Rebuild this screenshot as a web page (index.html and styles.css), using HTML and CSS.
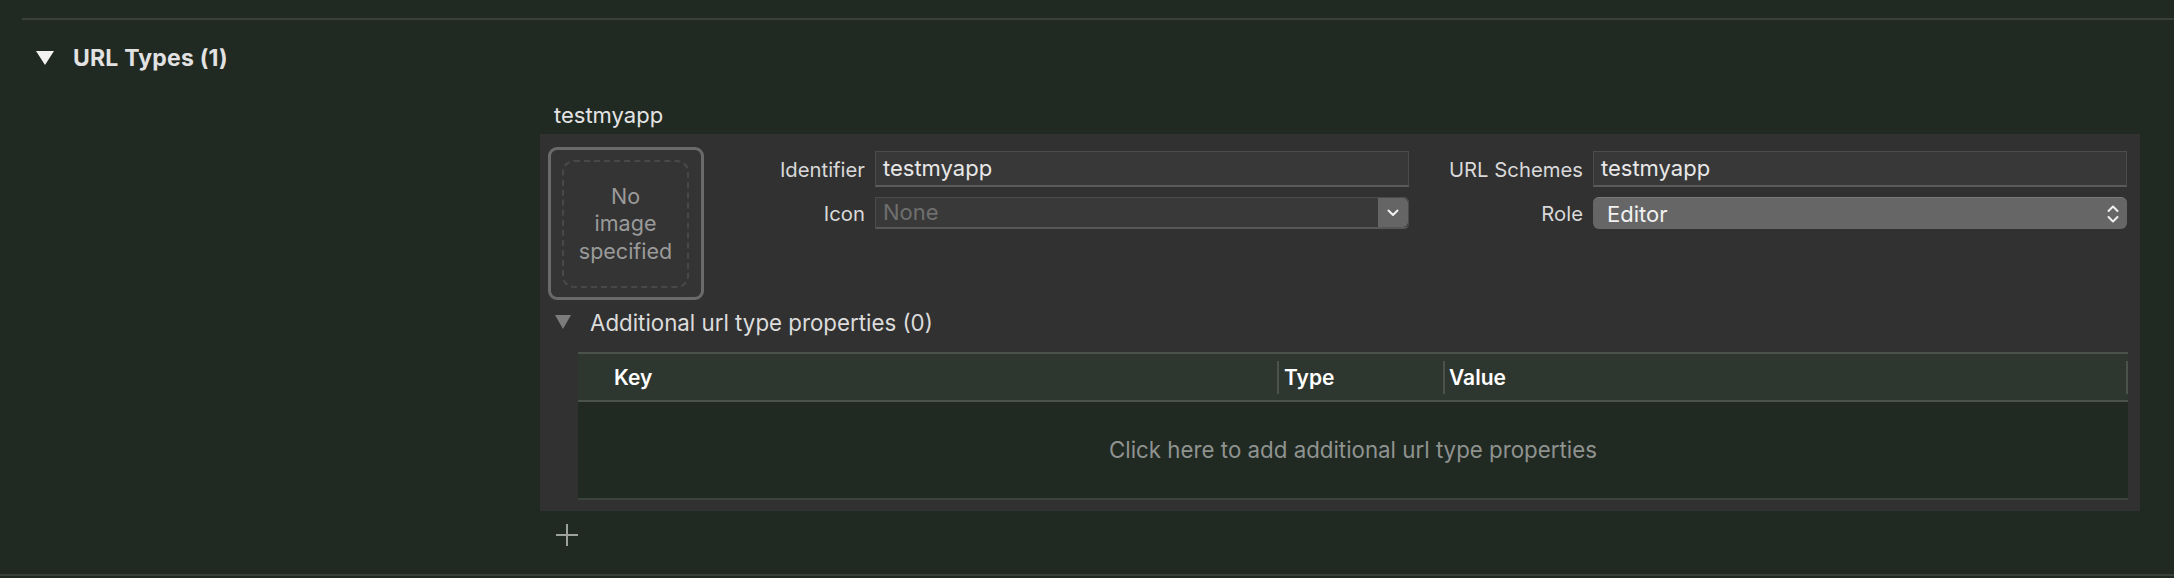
FILE: index.html
```html
<!DOCTYPE html>
<html lang="en">
<head>
    <meta charset="UTF-8">
    <title>URL Types</title>
    <link rel="stylesheet" href="styles.css">
</head>
<body>
    <div class="rule rule-top"></div>

    <div class="section-head">
        <svg class="tri" width="18" height="14" viewBox="0 0 18 14"><polygon points="0,0 18,0 9,14" fill="#f2f2f2"/></svg>
        <span>URL Types (1)</span>
    </div>

    <div class="section-body">
        <div class="item-title">testmyapp</div>

        <div class="panel">
            <div class="top-row">
                <div class="image-well">
                    <div class="image-well-inner">No<br>image<br>specified</div>
                </div>

                <div class="fields">
                    <label class="field-label">Identifier</label>
                    <div class="text-field">testmyapp</div>
                    <label class="field-label">URL Schemes</label>
                    <div class="text-field">testmyapp</div>

                    <label class="field-label">Icon</label>
                    <div class="combo">
                        <span class="combo-text">None</span>
                        <span class="combo-btn">
                            <svg width="12" height="8" viewBox="0 0 12 8"><polyline points="1.5,1.5 6,6 10.5,1.5" fill="none" stroke="#f0f0f0" stroke-width="2" stroke-linecap="round" stroke-linejoin="round"/></svg>
                        </span>
                    </div>
                    <label class="field-label">Role</label>
                    <div class="popup">
                        <span>Editor</span>
                        <svg width="12" height="20" viewBox="0 0 12 20"><polyline points="1.5,7 6,2.5 10.5,7" fill="none" stroke="#f0f0f0" stroke-width="2" stroke-linecap="round" stroke-linejoin="round"/><polyline points="1.5,13 6,17.5 10.5,13" fill="none" stroke="#f0f0f0" stroke-width="2" stroke-linecap="round" stroke-linejoin="round"/></svg>
                    </div>
                </div>
            </div>

            <div class="disclosure">
                <svg width="16" height="14" viewBox="0 0 16 14"><polygon points="0,0 16,0 8,14" fill="#7c7c7c"/></svg>
                <span>Additional url type properties (0)</span>
            </div>

            <div class="props-table">
                <div class="props-head">
                    <div class="col col-key">Key</div>
                    <div class="col col-type">Type</div>
                    <div class="col col-value">Value</div>
                </div>
                <div class="props-body">Click here to add additional url type properties</div>
            </div>
        </div>

        <div class="add-row">
            <svg width="22" height="22" viewBox="0 0 22 22"><line x1="11" y1="0" x2="11" y2="22" stroke="#9ea29e" stroke-width="2"/><line x1="0" y1="11" x2="22" y2="11" stroke="#9ea29e" stroke-width="2"/></svg>
        </div>
    </div>

    <div class="rule rule-bottom"></div>
</body>
</html>
```

FILE: styles.css
```css
body {
    margin: 0;
    background-color: #212923;
    font-family: Inter, "Noto Sans", sans-serif;
    color: #dedede;
    width: 2174px;
    height: 578px;
    overflow: hidden;
}

.rule {
    height: 2px;
    background-color: #394039;
}

.rule-top {
    margin: 18px 0 0 22px;
}

.section-head {
    height: 76px;
    display: flex;
    align-items: center;
    padding-left: 36px;
    font-size: 23px;
    font-weight: bold;
    letter-spacing: 0.2px;
    color: #e2e2e2;
}

.section-head .tri {
    margin-right: 19px;
}

.section-body {
    margin-left: 540px;
    width: 1600px;
}

.item-title {
    height: 38px;
    line-height: 38px;
    padding-left: 14px;
    font-size: 22px;
    color: #e4e4e4;
}

.panel {
    background-color: #313131;
    padding: 13px 12px 11px 8px;
}

.top-row {
    display: flex;
}

.image-well {
    width: 127px;
    height: 128px;
    border: 3px solid #6a6a6a;
    border-radius: 9px;
    background-color: #343434;
    padding: 10px 12px 9px 11px;
    display: flex;
}

.image-well-inner {
    flex: 1;
    border: 2px dashed #484848;
    border-radius: 12px;
    display: flex;
    align-items: center;
    justify-content: center;
    text-align: center;
    font-size: 21.5px;
    line-height: 27.5px;
    color: #9a9a9a;
}

.fields {
    margin-top: 4px;
    display: grid;
    grid-template-columns: 161px 534px 164px 534px;
    grid-template-rows: 36px 32px;
    column-gap: 10px;
    row-gap: 10px;
    align-items: center;
    align-self: flex-start;
}

.field-label {
    text-align: right;
    font-size: 20.3px;
    color: #d9d9d9;
}

.text-field {
    height: 36px;
    box-sizing: border-box;
    background-color: #383838;
    border: 1px solid #4c4c4c;
    border-bottom: 2px solid #5b5b5b;
    padding-left: 7px;
    font-size: 22px;
    line-height: 33px;
    color: #e8e8e8;
}

.combo {
    height: 32px;
    box-sizing: border-box;
    display: flex;
    background-color: #393939;
    border: 1px solid #4c4c4c;
    border-bottom: 2px solid #575757;
    border-radius: 0 5px 5px 0;
}

.combo-text {
    flex: 1;
    padding-left: 7px;
    font-size: 22px;
    line-height: 29px;
    color: #6f6f6f;
}

.combo-btn {
    width: 30px;
    background-color: #656565;
    border-radius: 0 5px 5px 0;
    display: flex;
    align-items: center;
    justify-content: center;
}

.popup {
    height: 32px;
    box-sizing: border-box;
    background-color: #666666;
    border-top: 1px solid #7a7a7a;
    border-radius: 6px;
    display: flex;
    align-items: center;
    justify-content: space-between;
    padding: 0 8px 0 14px;
    font-size: 22px;
    color: #f2f2f2;
}

.disclosure {
    height: 44px;
    display: flex;
    align-items: center;
    padding-left: 7px;
    margin-bottom: 8px;
    font-size: 22.3px;
    color: #dcdcdc;
}

.disclosure svg {
    margin-right: 19px;
}

.props-table {
    margin-left: 30px;
}

.props-head {
    height: 46px;
    display: flex;
    align-items: center;
    background-color: #2e372f;
    border-top: 2px solid #4a524b;
    border-bottom: 2px solid #4a524b;
    font-size: 21px;
    font-weight: 600;
    color: #ffffff;
}

.col {
    height: 33px;
    line-height: 33px;
    box-sizing: border-box;
}

.col-key {
    width: 699px;
    padding-left: 36px;
}

.col-type {
    width: 166px;
    border-left: 2px solid #4a524b;
    padding-left: 5px;
}

.col-value {
    flex: 1;
    border-left: 2px solid #4a524b;
    border-right: 2px solid #4a524b;
    padding-left: 4px;
}

.props-body {
    height: 96px;
    line-height: 96px;
    background-color: #212923;
    border-bottom: 2px solid #3b443c;
    text-align: center;
    font-size: 22.3px;
    color: #8f938f;
}

.add-row {
    height: 50px;
    padding: 13px 0 0 16px;
}

.add-row svg {
    display: block;
}
```
